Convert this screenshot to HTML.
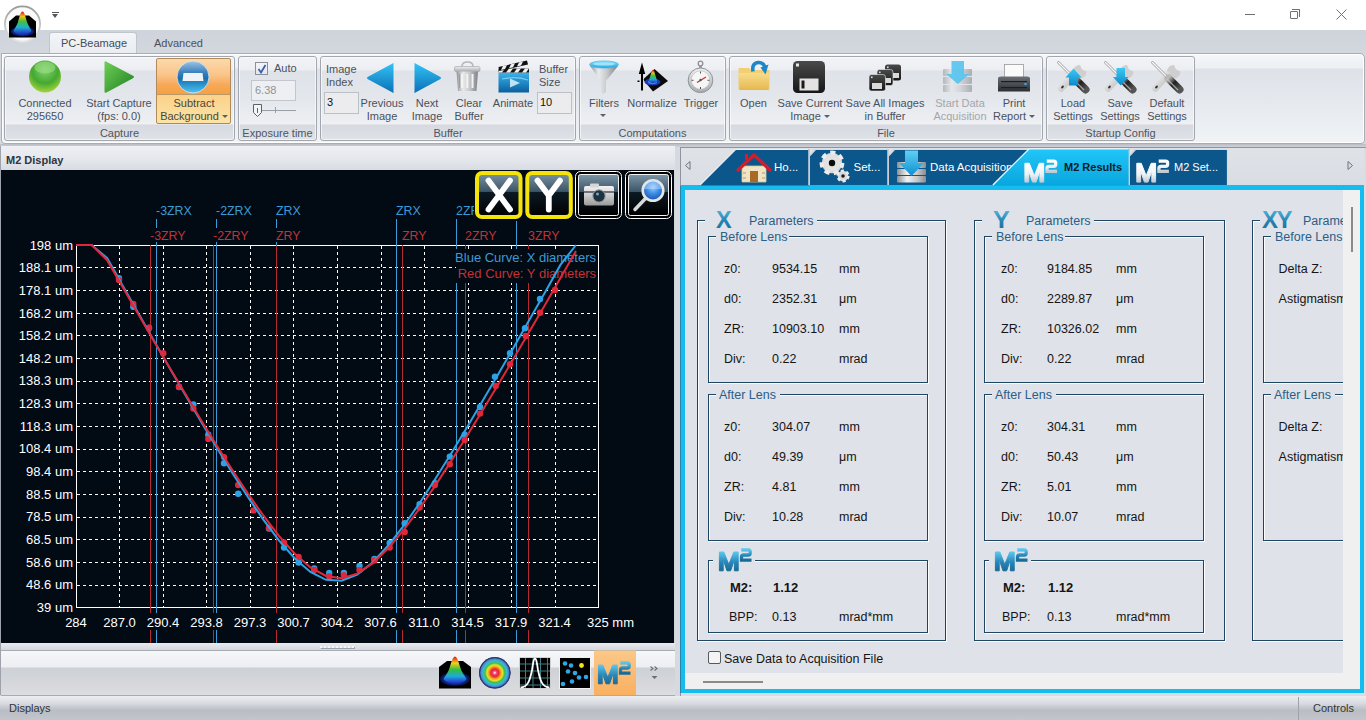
<!DOCTYPE html>
<html><head><meta charset="utf-8">
<style>
*{margin:0;padding:0;box-sizing:border-box}
html,body{width:1366px;height:720px;overflow:hidden}
body{position:relative;background:#d6d9df;font-family:"Liberation Sans",sans-serif;font-size:11px;color:#4b515c}
.a{position:absolute}
.t{position:absolute;white-space:nowrap;line-height:13px}
.c{text-align:center}
/* title bar */
#title{left:0;top:0;width:1366px;height:30px;background:#fff}
/* ribbon */
#tabrow{left:0;top:30px;width:1366px;height:25px;background:linear-gradient(#cfd3db,#d3d7de)}
#rbody{left:1px;top:53px;width:1364px;height:91px;background:linear-gradient(#f5f7fa 0,#eceff3 14px,#dee2e8 15px,#e6e9ee 50px,#f0f4f6 88px);border:1px solid #a9adb3;border-radius:0 5px 4px 4px;box-shadow:inset 0 0 0 1px #fff}
.grp{position:absolute;top:56px;height:85px;border:1px solid #a2a7af;border-radius:3px;
 background:linear-gradient(#f2f3f6 0,#eceef2 13px,#dfe2e8 14px,#e3e6eb 40px,#eef0f3 67px,#d6d9df 68px,#e0e3e8 84px);box-shadow:inset 0 0 0 1px rgba(255,255,255,.6)}
.gl{position:absolute;bottom:0px;left:0;right:0;text-align:center;line-height:13px;color:#4f5562}
.dd{display:inline-block;width:0;height:0;border-left:3px solid transparent;border-right:3px solid transparent;border-top:3px solid #5a606b;vertical-align:middle;margin-left:3px;margin-top:-2px}
.tb{position:absolute;background:#eceef1;border:1px solid #b7bcc4}
</style></head><body>
<svg width="0" height="0" style="position:absolute">
<defs>
<linearGradient id="m2teal" x1="0" y1="0" x2="0" y2="1"><stop offset="0" stop-color="#5cc6ee"/><stop offset="0.55" stop-color="#2686b9"/><stop offset="1" stop-color="#1a6a96"/></linearGradient>
<linearGradient id="m2silver" x1="0" y1="0" x2="0" y2="1"><stop offset="0" stop-color="#ffffff"/><stop offset="0.6" stop-color="#eef1f4"/><stop offset="1" stop-color="#c2cad2"/></linearGradient>
<g id="m2sym">
<path d="M0.4 22.8V4H4.8L9.8 16.5L14.8 4H19.2V22.8H15.4V11.5L11.6 22.8H8L4.2 11.5V22.8Z"/>
<path d="M22.3 1.8H29.2Q31.2 1.8 31.2 3.8V4.9Q31.2 7 29.2 7H24.6Q22.5 7 22.5 9.1V12.1H32.5" fill="none" stroke-width="3.3"/>
</g>
</defs></svg>
<div id="title" class="a"></div>
<!-- window controls -->
<div class="a" style="left:1245px;top:14px;width:10px;height:1px;background:#707070"></div>
<div class="a" style="left:1290px;top:11px;width:8px;height:8px;border:1px solid #707070;border-radius:1px"></div>
<div class="a" style="left:1292px;top:9px;width:8px;height:8px;border-top:1px solid #707070;border-right:1px solid #707070;border-radius:0 1px 0 0"></div>
<svg class="a" style="left:1336px;top:9px" width="11" height="11"><path d="M0.5 0.5L10.5 10.5M10.5 0.5L0.5 10.5" stroke="#707070" stroke-width="1"/></svg>
<!-- quick access -->
<div class="a" style="left:52px;top:12px;width:7px;height:1px;background:#555"></div>
<div class="a" style="left:52px;top:14px;width:0;height:0;border-left:3.5px solid transparent;border-right:3.5px solid transparent;border-top:4px solid #555"></div>

<div id="tabrow" class="a"></div>
<div class="a" style="left:49px;top:32px;width:88px;height:23px;border:1px solid #c1c5cc;border-bottom:none;border-radius:3px 3px 0 0;background:linear-gradient(#f3f5f8,#e9ecf0)"></div>
<div class="t" style="left:61px;top:37px;color:#454b57">PC-Beamage</div>
<div class="t" style="left:154px;top:37px;color:#4b515c">Advanced</div>

<div id="rbody" class="a"></div>
<div class="a" style="left:0;top:144px;width:1366px;height:3px;background:linear-gradient(#b9bdc3,#d0d3d9)"></div>

<!-- groups -->
<div class="grp" style="left:4px;width:231px"><div class="gl">Capture</div></div>
<div class="grp" style="left:238px;width:79px"><div class="gl">Exposure time</div></div>
<div class="grp" style="left:320px;width:256px"><div class="gl">Buffer</div></div>
<div class="grp" style="left:579px;width:147px"><div class="gl">Computations</div></div>
<div class="grp" style="left:729px;width:314px"><div class="gl">File</div></div>
<div class="grp" style="left:1046px;width:149px"><div class="gl">Startup Config</div></div>


<!-- Capture -->
<div class="a" style="left:156px;top:58px;width:75px;height:66px;border:1px solid #b08a58;border-radius:2px;background:linear-gradient(#fcd9ab 0,#fac489 25%,#f7a95a 40%,#f6a042 54%,#9c8058 55%,#fbd28b 56.5%,#fde3a6 100%)"></div>
<div class="t c" style="left:4px;top:97px;width:82px">Connected<br>295650</div>
<div class="t c" style="left:80px;top:97px;width:78px">Start Capture<br>(fps: 0.0)</div>
<div class="t c" style="left:156px;top:97px;width:76px;color:#4a4636">Subtract<br>Background<span class="dd"></span></div>

<!-- Exposure -->
<div class="a" style="left:255px;top:62px;width:13px;height:13px;border:1px solid #8a8f98;background:linear-gradient(#f4f5f7,#e4e6ea)"></div>
<svg class="a" style="left:257px;top:64px" width="10" height="10"><path d="M1.5 5 L4 8.5 L8.5 1" fill="none" stroke="#3b5fb0" stroke-width="1.8"/></svg>
<div class="t" style="left:274px;top:62px">Auto</div>
<div class="tb" style="left:251px;top:80px;width:45px;height:21px;background:#eeeff2;border-color:#c3c6cc"></div>
<div class="t" style="left:255px;top:84px;color:#8f939b">6.38</div>
<div class="a" style="left:262px;top:110px;width:34px;height:1px;background:#9a9ea6"></div>
<div class="a" style="left:275px;top:107px;width:1px;height:6px;background:#9a9ea6"></div>
<svg class="a" style="left:252px;top:103px" width="11" height="15"><path d="M1.5 1.5H9.5V9.5L5.5 13.5L1.5 9.5Z" fill="#f3f4f6" stroke="#5c6068"/><path d="M5.5 5V10" stroke="#5c6068"/></svg>

<!-- Buffer -->
<div class="t" style="left:326px;top:63px">Image<br>Index</div>
<div class="tb" style="left:324px;top:92px;width:35px;height:22px;background:#ececef;border-color:#bcc0c7"></div>
<div class="t" style="left:327px;top:96px;color:#111">3</div>
<div class="t c" style="left:358px;top:97px;width:48px">Previous<br>Image</div>
<div class="t c" style="left:406px;top:97px;width:42px">Next<br>Image</div>
<div class="t c" style="left:448px;top:97px;width:42px">Clear<br>Buffer</div>
<div class="t c" style="left:490px;top:97px;width:46px;line-height:13px">Animate</div>
<div class="t" style="left:539px;top:63px">Buffer<br>Size</div>
<div class="tb" style="left:537px;top:92px;width:35px;height:22px;background:#ececef;border-color:#bcc0c7"></div>
<div class="t" style="left:540px;top:96px;color:#111">10</div>

<!-- Computations -->
<div class="t c" style="left:583px;top:97px;width:42px">Filters</div>
<div class="a" style="left:600px;top:114px;width:0;height:0;border-left:3px solid transparent;border-right:3px solid transparent;border-top:3px solid #5a606b"></div>
<div class="t c" style="left:625px;top:97px;width:54px">Normalize</div>
<div class="t c" style="left:679px;top:97px;width:44px">Trigger</div>

<!-- File -->
<div class="t c" style="left:733px;top:97px;width:41px">Open</div>
<div class="t c" style="left:774px;top:97px;width:72px">Save Current<br>Image<span class="dd"></span></div>
<div class="t c" style="left:845px;top:97px;width:80px">Save All Images<br>in Buffer</div>
<div class="t c" style="left:928px;top:97px;width:64px;color:#a3a6ab">Start Data<br>Acquisition</div>
<div class="t c" style="left:990px;top:97px;width:48px">Print<br>Report<span class="dd"></span></div>

<!-- Startup -->
<div class="t c" style="left:1050px;top:97px;width:46px">Load<br>Settings</div>
<div class="t c" style="left:1097px;top:97px;width:46px">Save<br>Settings</div>
<div class="t c" style="left:1144px;top:97px;width:46px">Default<br>Settings</div>
<svg class="a" style="left:0;top:0" width="1366" height="145" viewBox="0 0 1366 145">
<defs>
<radialGradient id="gsph" cx="0.5" cy="0.3" r="0.75"><stop offset="0" stop-color="#7fd46a"/><stop offset="0.55" stop-color="#45a832"/><stop offset="1" stop-color="#b4dc3c"/></radialGradient>
<linearGradient id="gtri" x1="0" y1="0" x2="1" y2="1"><stop offset="0" stop-color="#6fcf55"/><stop offset="1" stop-color="#1f7f22"/></linearGradient>
<linearGradient id="bsph" x1="0" y1="0" x2="0" y2="1"><stop offset="0" stop-color="#9cc6e6"/><stop offset="0.35" stop-color="#3d82bd"/><stop offset="0.55" stop-color="#1870b0"/><stop offset="1" stop-color="#4cc4f2"/></linearGradient>
<linearGradient id="btri" x1="0" y1="0" x2="0" y2="1"><stop offset="0" stop-color="#33c3f5"/><stop offset="1" stop-color="#0a70b6"/></linearGradient>
<linearGradient id="silv" x1="0" y1="0" x2="1" y2="0"><stop offset="0" stop-color="#8f9296"/><stop offset="0.3" stop-color="#e9eaeb"/><stop offset="0.6" stop-color="#c7c9cb"/><stop offset="1" stop-color="#7e8185"/></linearGradient>
<linearGradient id="silvv" x1="0" y1="0" x2="0" y2="1"><stop offset="0" stop-color="#f0f0f0"/><stop offset="1" stop-color="#a8aaad"/></linearGradient>
<linearGradient id="fold" x1="0" y1="0" x2="0" y2="1"><stop offset="0" stop-color="#f7dc8c"/><stop offset="1" stop-color="#e6b84e"/></linearGradient>
<linearGradient id="cone" x1="0" y1="0" x2="0" y2="1"><stop offset="0" stop-color="#e01010"/><stop offset="0.22" stop-color="#f0c020"/><stop offset="0.45" stop-color="#40c040"/><stop offset="0.7" stop-color="#20b0d0"/><stop offset="1" stop-color="#2030c0"/></linearGradient>
<radialGradient id="base" cx="0.5" cy="0.5" r="0.5"><stop offset="0" stop-color="#3aa0e0"/><stop offset="0.6" stop-color="#1830b0"/><stop offset="1" stop-color="#05104a"/></radialGradient>
<linearGradient id="ring" x1="0" y1="0" x2="0" y2="1"><stop offset="0" stop-color="#9a9a9a"/><stop offset="1" stop-color="#e6e6e6"/></linearGradient>
<linearGradient id="clap" x1="0" y1="0" x2="0" y2="1"><stop offset="0" stop-color="#39b4ec"/><stop offset="1" stop-color="#0b5f9e"/></linearGradient>
<linearGradient id="rim" x1="0" y1="0" x2="0" y2="1"><stop offset="0" stop-color="#8fe0fb"/><stop offset="1" stop-color="#1ea8e0"/></linearGradient>
<linearGradient id="flop" x1="0" y1="0" x2="0" y2="1"><stop offset="0" stop-color="#4a4a4a"/><stop offset="1" stop-color="#161616"/></linearGradient>
<linearGradient id="prn" x1="0" y1="0" x2="0" y2="1"><stop offset="0" stop-color="#6c7075"/><stop offset="1" stop-color="#2b2e32"/></linearGradient>
<linearGradient id="arrc" x1="0" y1="0" x2="0" y2="1"><stop offset="0" stop-color="#3cc8f4"/><stop offset="1" stop-color="#0a8acb"/></linearGradient>
<linearGradient id="hdl" x1="0" y1="0" x2="1" y2="0"><stop offset="0" stop-color="#2a2a2a"/><stop offset="0.5" stop-color="#b9b9b9"/><stop offset="1" stop-color="#3a3a3a"/></linearGradient>
</defs>

<!-- app logo -->
<circle cx="22.5" cy="24" r="17.6" fill="#fafafa" stroke="url(#ring)" stroke-width="1.8"/>
<path d="M9 21.5L16 15.5H29L36 21.5V37.5H9Z" fill="#000"/>
<ellipse cx="22.5" cy="31.5" rx="12" ry="5" fill="url(#base)"/>
<path d="M22.5 11.5C20.5 11.7 19.5 17 18 22C16.5 26.5 14 29 13.5 31C15 33.5 19 34 22.5 34C26 34 30 33.5 31.5 31C31 29 28.5 26.5 27 22C25.5 17 24.5 11.7 22.5 11.5Z" fill="url(#cone)"/>
<!-- Connected sphere -->
<circle cx="45" cy="76.5" r="16" fill="url(#gsph)"/>
<ellipse cx="45" cy="67.5" rx="10.5" ry="6" fill="#a2e08c" opacity=".55"/>
<!-- play -->
<path d="M106 61.5Q104.5 60.5 104.5 62.5V91.5Q104.5 93.5 106.5 92.5L133 78.3Q135 77 133 75.8Z" fill="url(#gtri)"/>
<!-- subtract bg sphere -->
<circle cx="193" cy="77" r="16" fill="url(#bsph)" stroke="#d9e9f4" stroke-width=".8"/>

<path d="M183.5 73H202.5L203.5 81H182.5Z" fill="#eef3f6"/>

<!-- prev / next -->
<path d="M393.5 63.5Q394 62.5 393 63.2L367.5 77Q366.5 78 367.5 79L393 92.8Q394 93.5 393.5 92Z" fill="url(#btri)"/>
<path d="M414.5 63.5Q414 62.5 415 63.2L440.5 77Q441.5 78 440.5 79L415 92.8Q414 93.5 414.5 92Z" fill="url(#btri)"/>
<!-- trash -->
<path d="M462 66.5Q462 62 467.5 62Q473 62 473 66.5" fill="none" stroke="#b5b7ba" stroke-width="1.6"/>
<rect x="454.5" y="66.5" width="25.5" height="5" rx="1.5" fill="url(#silvv)" stroke="#9ea1a4" stroke-width=".6"/>
<path d="M456.5 71.5H478L476.5 91H458Z" fill="url(#silv)"/>
<path d="M462 74V88M467.3 74V88M472.5 74V88" stroke="#f2f2f2" stroke-width="2"/>
<path d="M459.5 74V88" stroke="#9a9c9f" stroke-width="1"/>
<!-- clapperboard -->
<rect x="498.5" y="72.5" width="30.5" height="20" fill="url(#clap)"/>
<path d="M502 79Q515 76 528 80" stroke="#9fe0ff" stroke-width="1.2" fill="none" opacity=".7"/>
<path d="M510 78.5L520 83L510 87.5Z" fill="#d8f2ff" opacity=".85"/>
<rect x="498.5" y="68.5" width="30.5" height="4" fill="#111"/>
<path d="M501 68.5h4l-3 4h-4zM509 68.5h4l-3 4h-4zM517 68.5h4l-3 4h-4zM525 68.5h4l-3 4h-4z" fill="#f2f2f2"/>
<path d="M498.5 67L527 60.5L528 64.5L499.5 71Z" fill="#111"/>
<path d="M503 66l4-1-2 4-4 1zM511 64.2l4-1-2 4-4 1zM519 62.4l4-1-2 4-4 1z" fill="#f2f2f2"/>

<!-- funnel -->
<path d="M590 66H618L606 81V92L603 94L601 92V81Z" fill="url(#silv)"/>
<ellipse cx="604" cy="64.5" rx="14.5" ry="3.6" fill="url(#rim)" stroke="#2fb4e6" stroke-width=".6"/>
<ellipse cx="604" cy="64" rx="11" ry="1.6" fill="#bfefff" opacity=".7"/>
<!-- normalize -->
<path d="M643 79.5L654.5 69L668 81L653 91.5Z" fill="#0a0a0a"/>
<ellipse cx="652.5" cy="82" rx="8" ry="3.5" fill="#1d36b8"/>
<ellipse cx="652.5" cy="82" rx="4.5" ry="2" fill="#2c8ee0"/>
<path d="M653 70C651.5 70 651 75 649 80C648.5 82 651 83 653 83C655 83 657.5 82 657 80C655 75 654.5 70 653 70Z" fill="url(#cone)"/>
<path d="M642 90.5V69" stroke="#fff" stroke-width="3.6" opacity=".8"/>
<path d="M642 90.5V69" stroke="#000" stroke-width="2.2"/>
<path d="M638.8 74L642 62.5L645.2 74Z" fill="#000"/>
<rect x="637.5" y="80.5" width="2" height="1.5" fill="#000"/>
<!-- stopwatch -->
<circle cx="700.5" cy="63.5" r="2.3" fill="none" stroke="#8d9094" stroke-width="1.3"/>
<rect x="699" y="65.5" width="3" height="3" fill="#9a9da1"/>
<circle cx="700.5" cy="80.3" r="12.3" fill="url(#silvv)" stroke="#8f9296" stroke-width="1"/>
<circle cx="700.5" cy="80" r="9.2" fill="#f6f6f6" stroke="#b9bcbf" stroke-width=".6"/>
<path d="M697 82.5L706 77" stroke="#d62b2b" stroke-width="1.3"/><path d="M691.5 80.3h2M707.5 80.3h2M700.5 89v-2M700.5 71.5v2" stroke="#555" stroke-width="1"/>
<circle cx="700.5" cy="80" r="1.2" fill="#555"/>

<!-- open folder -->
<path d="M738.5 68H749L751 70H769.5V90H738.5Z" fill="#f1cf72"/>
<path d="M738.5 73H769.5L768.5 90H739.5Z" fill="url(#fold)"/>
<path d="M753 71.5Q751.5 63 758.5 62.5Q763 62.3 765 67" fill="none" stroke="#1f86c8" stroke-width="3.6"/>
<path d="M760.5 67.5L768.5 64.5L765.5 74.5Z" fill="#1f86c8"/>
<!-- floppy -->
<rect x="793" y="61" width="32" height="32" rx="4.5" fill="url(#flop)"/>
<rect x="796" y="63.5" width="3" height="3" fill="#e8e8e8"/>
<rect x="799.5" y="78.5" width="19" height="12" fill="#e3e3e3"/>
<rect x="801.5" y="80.5" width="3" height="8" fill="#1a1a1a"/>
<!-- multi floppy -->
<rect x="885" y="64.5" width="16" height="16" rx="2.5" fill="url(#flop)"/>
<rect x="893" y="73" width="6" height="5" fill="#d9d9d9"/>
<rect x="877" y="69.5" width="16" height="16" rx="2.5" fill="url(#flop)" stroke="#e6e9ee" stroke-width=".6"/>
<rect x="885" y="78" width="6" height="5" fill="#d9d9d9"/>
<rect x="869" y="74.5" width="16.5" height="16.5" rx="2.5" fill="url(#flop)" stroke="#e6e9ee" stroke-width=".6"/>
<rect x="872" y="83" width="10" height="6" fill="#d9d9d9"/>
<rect x="871" y="76.5" width="1.6" height="1.6" fill="#ddd"/><rect x="879" y="71.5" width="1.6" height="1.6" fill="#ddd"/><rect x="887" y="66.5" width="1.6" height="1.6" fill="#ddd"/>
<!-- start data acq (disabled) -->
<g opacity=".55">
<rect x="943" y="69" width="29" height="7" rx="1" fill="url(#silv)"/>
<rect x="943" y="77" width="29" height="7" rx="1" fill="url(#silv)"/>
<rect x="943" y="85" width="29" height="7" rx="1" fill="url(#silv)"/>
</g>
<path d="M951.5 61H964V74H969.5L957.8 84L946 74H951.5Z" fill="#55c3ee" opacity=".9"/>
<!-- printer -->
<rect x="1004.5" y="64.5" width="19" height="15" fill="#fafafa" stroke="#9a9a9a" stroke-width=".8"/>
<path d="M998 78.5Q998 76.5 1001 76.5H1027Q1030 76.5 1030 78.5V91.5H998Z" fill="url(#prn)"/>
<rect x="1001" y="81" width="26" height="1.2" fill="#1c1e20"/>
<rect x="1001" y="87" width="26" height="1.2" fill="#1c1e20"/>
<circle cx="1025.5" cy="84" r="1.3" fill="#3ba5e0"/>

<!-- tools -->
<defs><linearGradient id="hdl2" x1="0" y1="0" x2="1" y2="1"><stop offset="0" stop-color="#b8b8b8"/><stop offset="0.45" stop-color="#202020"/><stop offset="1" stop-color="#555"/></linearGradient>
<linearGradient id="wr" x1="0" y1="0" x2="1" y2="1"><stop offset="0" stop-color="#f4f4f4"/><stop offset="1" stop-color="#b5b5b5"/></linearGradient></defs>
<g id="tool">
<path d="M1174 65A6.8 6.8 0 1 0 1180.5 71.5L1177 70L1175.5 68.5Z" fill="#cfcfcf"/>
<path d="M1168 75L1155 88.5" stroke="url(#wr)" stroke-width="6.5" stroke-linecap="round"/>
<ellipse cx="1156.5" cy="87" rx="1.6" ry="1.1" fill="#333" transform="rotate(-45 1156.5 87)"/>
<path d="M1152.5 62.5L1166 76" stroke="#9a9a9a" stroke-width="2.6" stroke-linecap="round"/>
<path d="M1152.5 62.5L1166 76" stroke="#fafafa" stroke-width="1.4" stroke-linecap="round"/>
<path d="M1168.5 78.5L1179.5 89.5" stroke="url(#hdl2)" stroke-width="8" stroke-linecap="round"/>
<path d="M1167 79L1178 90" stroke="#cfcfcf" stroke-width="1.2" opacity=".7"/>
</g>
<use href="#tool" x="-94"/>
<path d="M1073.5 68.5L1081.5 77.5H1078V85.5H1069V77.5H1065.5Z" fill="url(#arrc)"/>
<use href="#tool" x="-47"/>
<path d="M1116.5 68H1125V77H1128.5L1120.7 85.5L1113 77H1116.5Z" fill="url(#arrc)"/>
</svg>
<!-- left panel frame -->
<div class="a" style="left:0;top:146px;width:675px;height:549px;background:#cfd3da;border-left:1px solid #9ea3ab"></div>
<div class="a" style="left:1px;top:146px;width:674px;height:24px;background:linear-gradient(#eef0f4,#e3e6eb 60%,#d8dce2)"></div>
<div class="t" style="left:6px;top:154px;font-weight:bold;font-size:11px;color:#2f3440">M2 Display</div>
<!-- splitter -->
<div class="a" style="left:1px;top:643px;width:674px;height:8px;background:linear-gradient(#e9ebef,#d3d7de);border-bottom:1px solid #a8acb3"></div>
<div class="a" style="left:320px;top:646px;width:34px;height:2px;background:repeating-linear-gradient(90deg,#f4f5f7 0 2px,transparent 2px 4px);box-shadow:1px 1px 0 rgba(120,125,135,.6)"></div>
<!-- display toolbar -->
<div class="a" style="left:1px;top:651px;width:674px;height:45px;background:linear-gradient(#f6f7f9 0,#eceef1 16px,#cdd0d5 17px,#dcdde0 44px);border-bottom:1px solid #a8abb1"></div>
<svg class="a" style="left:430px;top:650px" width="240" height="46" viewBox="430 650 240 46">
<defs>
<linearGradient id="or" x1="0" y1="0" x2="0" y2="1"><stop offset="0" stop-color="#fcc888"/><stop offset="1" stop-color="#f9b060"/></linearGradient>
<linearGradient id="cone2" x1="0" y1="0" x2="0" y2="1"><stop offset="0" stop-color="#e01010"/><stop offset="0.25" stop-color="#f0d020"/><stop offset="0.5" stop-color="#30c040"/><stop offset="0.75" stop-color="#20a8e0"/><stop offset="1" stop-color="#2030c8"/></linearGradient>
<radialGradient id="base2" cx="0.5" cy="0.5" r="0.5"><stop offset="0" stop-color="#40a8f0"/><stop offset="0.55" stop-color="#1838c0"/><stop offset="1" stop-color="#060c40"/></radialGradient>
<radialGradient id="rings" cx="0.5" cy="0.5" r="0.5">
<stop offset="0" stop-color="#fff"/><stop offset="0.12" stop-color="#f04080"/><stop offset="0.25" stop-color="#e82828"/><stop offset="0.38" stop-color="#f8a020"/><stop offset="0.5" stop-color="#e8e030"/><stop offset="0.62" stop-color="#40c040"/><stop offset="0.75" stop-color="#30c0d8"/><stop offset="0.88" stop-color="#5080d0"/><stop offset="1" stop-color="#203060"/></radialGradient>
<linearGradient id="m2g" x1="0" y1="0" x2="0" y2="1"><stop offset="0" stop-color="#58bfe6"/><stop offset="0.6" stop-color="#2482b4"/><stop offset="1" stop-color="#1a6a96"/></linearGradient>
</defs>
<!-- 3d beam -->
<path d="M439 667L447 661H463L471 667V688.5H439Z" fill="#000"/>
<ellipse cx="455" cy="679" rx="15" ry="7" fill="url(#base2)"/>
<path d="M455 656.5C452.5 657 451.5 662 449.5 668C448 673 445 676 443.5 679C446 682.5 450 683 455 683C460 683 464 682.5 466.5 679C465 676 462 673 460.5 668C458.5 662 457.5 657 455 656.5Z" fill="url(#cone2)"/>
<!-- rings -->
<circle cx="494.8" cy="672.8" r="15.8" fill="url(#rings)"/>
<circle cx="494.8" cy="672.8" r="15.3" fill="none" stroke="#2a3868" stroke-width="1"/>
<!-- gaussian -->
<rect x="519.5" y="657.5" width="31" height="31" fill="#000" stroke="#e8e8e8" stroke-width=".8"/>
<path d="M525.5 658V688M533 658V688M540.5 658V688M547.5 658V688M520 664H550M520 671H550M520 678H550M520 685H550" stroke="#3d7f86" stroke-width="1"/>
<path d="M520.5 687.5C528 687 530 680 532 670C533.5 660 534 658.5 535 658.5C536 658.5 536.5 660 538 670C540 680 542 687 549.5 687.5" fill="none" stroke="#fff" stroke-width="1.8"/>
<!-- scatter -->
<rect x="559.5" y="657.5" width="31" height="31" fill="#000" stroke="#f0f0f0" stroke-width="1"/>
<g fill="#2fa6e6">
<circle cx="565" cy="663.5" r="2.3"/><circle cx="571" cy="665.5" r="2.3"/><circle cx="568" cy="671.5" r="2.3"/><circle cx="575" cy="673" r="2.3"/><circle cx="579" cy="677.5" r="2.3"/><circle cx="586" cy="677" r="2.3"/><circle cx="572" cy="681.5" r="2.3"/><circle cx="563" cy="684" r="2.3"/>
</g>
<circle cx="581.5" cy="665.5" r="2.4" fill="#f2e41a"/>
<!-- active M2 -->
<rect x="594" y="650.5" width="42" height="44.5" fill="url(#or)"/>
<g transform="translate(598 661)" fill="url(#m2teal)" stroke="url(#m2teal)"><use href="#m2sym"/></g>
<!-- chevrons -->
<path d="M650.5 666.5L653 668.5L650.5 670.5M654.5 666.5L657 668.5L654.5 670.5" fill="none" stroke="#6a6e75" stroke-width="1.1"/>
<path d="M651.5 676H657.5L654.5 679Z" fill="#6a6e75"/>
</svg>
<svg class="a" style="left:0;top:170px" width="676" height="473" viewBox="0 170 676 473">
<rect x="1" y="170" width="673" height="473" fill="#020a14"/>
<g stroke="#ffffff" stroke-width="1" stroke-dasharray="3 3" shape-rendering="crispEdges">
<line x1="77" y1="267.5" x2="598" y2="267.5"/>
<line x1="77" y1="290.5" x2="598" y2="290.5"/>
<line x1="77" y1="313.5" x2="598" y2="313.5"/>
<line x1="77" y1="335.5" x2="598" y2="335.5"/>
<line x1="77" y1="358.5" x2="598" y2="358.5"/>
<line x1="77" y1="381.5" x2="598" y2="381.5"/>
<line x1="77" y1="403.5" x2="598" y2="403.5"/>
<line x1="77" y1="426.5" x2="598" y2="426.5"/>
<line x1="77" y1="449.5" x2="598" y2="449.5"/>
<line x1="77" y1="471.5" x2="598" y2="471.5"/>
<line x1="77" y1="494.5" x2="598" y2="494.5"/>
<line x1="77" y1="517.5" x2="598" y2="517.5"/>
<line x1="77" y1="539.5" x2="598" y2="539.5"/>
<line x1="77" y1="562.5" x2="598" y2="562.5"/>
<line x1="77" y1="585.5" x2="598" y2="585.5"/>
<line x1="119.5" y1="246" x2="119.5" y2="607"/>
<line x1="163.5" y1="246" x2="163.5" y2="607"/>
<line x1="206.5" y1="246" x2="206.5" y2="607"/>
<line x1="250.5" y1="246" x2="250.5" y2="607"/>
<line x1="293.5" y1="246" x2="293.5" y2="607"/>
<line x1="337.5" y1="246" x2="337.5" y2="607"/>
<line x1="381.5" y1="246" x2="381.5" y2="607"/>
<line x1="424.5" y1="246" x2="424.5" y2="607"/>
<line x1="468.5" y1="246" x2="468.5" y2="607"/>
<line x1="511.5" y1="246" x2="511.5" y2="607"/>
<line x1="555.5" y1="246" x2="555.5" y2="607"/>
</g>
<path d="M76.5 245.5H598.5V607.5H76.5Z" fill="none" stroke="#fff" stroke-width="1" shape-rendering="crispEdges"/>
<g stroke-width="1" shape-rendering="crispEdges">
<line x1="156.5" y1="219" x2="156.5" y2="643" stroke="#3b9bd6"/>
<line x1="216.5" y1="219" x2="216.5" y2="643" stroke="#3b9bd6"/>
<line x1="276.5" y1="219" x2="276.5" y2="643" stroke="#3b9bd6"/>
<line x1="396.5" y1="219" x2="396.5" y2="643" stroke="#3b9bd6"/>
<line x1="456.5" y1="219" x2="456.5" y2="643" stroke="#3b9bd6"/>
<line x1="516.5" y1="219" x2="516.5" y2="643" stroke="#3b9bd6"/>
<line x1="150.5" y1="245" x2="150.5" y2="643" stroke="#b42a30"/>
<line x1="213.5" y1="245" x2="213.5" y2="643" stroke="#b42a30"/>
<line x1="276.5" y1="245" x2="276.5" y2="643" stroke="#b42a30"/>
<line x1="402.5" y1="245" x2="402.5" y2="643" stroke="#b42a30"/>
<line x1="465.5" y1="245" x2="465.5" y2="643" stroke="#b42a30"/>
<line x1="528.5" y1="245" x2="528.5" y2="643" stroke="#b42a30"/>
</g>
<rect x="60" y="613" width="560" height="17" fill="#020a14"/>
<text x="76.0" y="627" font-family="Liberation Sans" font-size="13" fill="#fff" text-anchor="middle">284</text>
<text x="119.5" y="627" font-family="Liberation Sans" font-size="13" fill="#fff" text-anchor="middle">287.0</text>
<text x="163.0" y="627" font-family="Liberation Sans" font-size="13" fill="#fff" text-anchor="middle">290.4</text>
<text x="206.5" y="627" font-family="Liberation Sans" font-size="13" fill="#fff" text-anchor="middle">293.8</text>
<text x="250.0" y="627" font-family="Liberation Sans" font-size="13" fill="#fff" text-anchor="middle">297.3</text>
<text x="293.5" y="627" font-family="Liberation Sans" font-size="13" fill="#fff" text-anchor="middle">300.7</text>
<text x="337.0" y="627" font-family="Liberation Sans" font-size="13" fill="#fff" text-anchor="middle">304.2</text>
<text x="380.5" y="627" font-family="Liberation Sans" font-size="13" fill="#fff" text-anchor="middle">307.6</text>
<text x="424.0" y="627" font-family="Liberation Sans" font-size="13" fill="#fff" text-anchor="middle">311.0</text>
<text x="467.5" y="627" font-family="Liberation Sans" font-size="13" fill="#fff" text-anchor="middle">314.5</text>
<text x="511.0" y="627" font-family="Liberation Sans" font-size="13" fill="#fff" text-anchor="middle">317.9</text>
<text x="554.5" y="627" font-family="Liberation Sans" font-size="13" fill="#fff" text-anchor="middle">321.4</text>
<text x="587" y="627" font-family="Liberation Sans" font-size="13" fill="#fff">325 mm</text>
<text x="73" y="249.7" font-family="Liberation Sans" font-size="13" fill="#fff" text-anchor="end">198 um</text>
<text x="73" y="272.3" font-family="Liberation Sans" font-size="13" fill="#fff" text-anchor="end">188.1 um</text>
<text x="73" y="294.9" font-family="Liberation Sans" font-size="13" fill="#fff" text-anchor="end">178.1 um</text>
<text x="73" y="317.6" font-family="Liberation Sans" font-size="13" fill="#fff" text-anchor="end">168.2 um</text>
<text x="73" y="340.2" font-family="Liberation Sans" font-size="13" fill="#fff" text-anchor="end">158.2 um</text>
<text x="73" y="362.8" font-family="Liberation Sans" font-size="13" fill="#fff" text-anchor="end">148.2 um</text>
<text x="73" y="385.4" font-family="Liberation Sans" font-size="13" fill="#fff" text-anchor="end">138.3 um</text>
<text x="73" y="408.1" font-family="Liberation Sans" font-size="13" fill="#fff" text-anchor="end">128.3 um</text>
<text x="73" y="430.7" font-family="Liberation Sans" font-size="13" fill="#fff" text-anchor="end">118.3 um</text>
<text x="73" y="453.3" font-family="Liberation Sans" font-size="13" fill="#fff" text-anchor="end">108.4 um</text>
<text x="73" y="475.9" font-family="Liberation Sans" font-size="13" fill="#fff" text-anchor="end">98.4 um</text>
<text x="73" y="498.6" font-family="Liberation Sans" font-size="13" fill="#fff" text-anchor="end">88.5 um</text>
<text x="73" y="521.2" font-family="Liberation Sans" font-size="13" fill="#fff" text-anchor="end">78.5 um</text>
<text x="73" y="543.8" font-family="Liberation Sans" font-size="13" fill="#fff" text-anchor="end">68.5 um</text>
<text x="73" y="566.5" font-family="Liberation Sans" font-size="13" fill="#fff" text-anchor="end">58.6 um</text>
<text x="73" y="589.1" font-family="Liberation Sans" font-size="13" fill="#fff" text-anchor="end">48.6 um</text>
<text x="73" y="611.7" font-family="Liberation Sans" font-size="13" fill="#fff" text-anchor="end">39 um</text>
<rect x="156" y="203" width="37.6" height="15" fill="#020a14"/>
<rect x="216" y="203" width="37.6" height="15" fill="#020a14"/>
<rect x="276" y="203" width="26.0" height="15" fill="#020a14"/>
<rect x="396" y="203" width="26.0" height="15" fill="#020a14"/>
<rect x="456" y="203" width="33.2" height="15" fill="#020a14"/>
<rect x="516" y="203" width="33.2" height="15" fill="#020a14"/>
<rect x="150" y="228" width="37.6" height="14" fill="#020a14"/>
<rect x="213" y="228" width="37.6" height="14" fill="#020a14"/>
<rect x="276" y="228" width="26.0" height="14" fill="#020a14"/>
<rect x="402" y="228" width="26.0" height="14" fill="#020a14"/>
<rect x="465" y="228" width="33.2" height="14" fill="#020a14"/>
<rect x="528" y="228" width="33.2" height="14" fill="#020a14"/>
<text x="156" y="215" font-family="Liberation Sans" font-size="12.4" fill="#3b9bd6">-3ZRX</text>
<text x="216" y="215" font-family="Liberation Sans" font-size="12.4" fill="#3b9bd6">-2ZRX</text>
<text x="276" y="215" font-family="Liberation Sans" font-size="12.4" fill="#3b9bd6">ZRX</text>
<text x="396" y="215" font-family="Liberation Sans" font-size="12.4" fill="#3b9bd6">ZRX</text>
<text x="456" y="215" font-family="Liberation Sans" font-size="12.4" fill="#3b9bd6">2ZRX</text>
<text x="516" y="215" font-family="Liberation Sans" font-size="12.4" fill="#3b9bd6">3ZRX</text>
<text x="150" y="240" font-family="Liberation Sans" font-size="12.4" fill="#c23236">-3ZRY</text>
<text x="213" y="240" font-family="Liberation Sans" font-size="12.4" fill="#c23236">-2ZRY</text>
<text x="276" y="240" font-family="Liberation Sans" font-size="12.4" fill="#c23236">ZRY</text>
<text x="402" y="240" font-family="Liberation Sans" font-size="12.4" fill="#c23236">ZRY</text>
<text x="465" y="240" font-family="Liberation Sans" font-size="12.4" fill="#c23236">2ZRY</text>
<text x="528" y="240" font-family="Liberation Sans" font-size="12.4" fill="#c23236">3ZRY</text>
<rect x="456" y="249" width="141" height="34" fill="#020a14"/>
<text x="596" y="262" font-family="Liberation Sans" font-size="13" fill="#3b9bd6" text-anchor="end">Blue Curve: X diameters</text>
<text x="596" y="278" font-family="Liberation Sans" font-size="13" fill="#c23236" text-anchor="end">Red Curve: Y diameters</text>
<circle cx="119" cy="278.3" r="3.2" fill="#2ba3e6"/>
<circle cx="133.3" cy="306.7" r="3.2" fill="#2ba3e6"/>
<circle cx="149" cy="328" r="3.2" fill="#2ba3e6"/>
<circle cx="179" cy="387" r="3.2" fill="#2ba3e6"/>
<circle cx="193.4" cy="404.5" r="3.2" fill="#2ba3e6"/>
<circle cx="208.3" cy="434.7" r="3.2" fill="#2ba3e6"/>
<circle cx="224" cy="463.2" r="3.2" fill="#2ba3e6"/>
<circle cx="238.2" cy="493.75" r="3.2" fill="#2ba3e6"/>
<circle cx="269" cy="528.5" r="3.2" fill="#2ba3e6"/>
<circle cx="284" cy="547.6" r="3.2" fill="#2ba3e6"/>
<circle cx="298.6" cy="562.5" r="3.2" fill="#2ba3e6"/>
<circle cx="314.2" cy="568.4" r="3.2" fill="#2ba3e6"/>
<circle cx="329.2" cy="573" r="3.2" fill="#2ba3e6"/>
<circle cx="343.9" cy="573" r="3.2" fill="#2ba3e6"/>
<circle cx="359.5" cy="566" r="3.2" fill="#2ba3e6"/>
<circle cx="374.4" cy="559" r="3.2" fill="#2ba3e6"/>
<circle cx="389.7" cy="543" r="3.2" fill="#2ba3e6"/>
<circle cx="404.7" cy="523.3" r="3.2" fill="#2ba3e6"/>
<circle cx="419.6" cy="504.2" r="3.2" fill="#2ba3e6"/>
<circle cx="434.9" cy="483.3" r="3.2" fill="#2ba3e6"/>
<circle cx="449.8" cy="456.6" r="3.2" fill="#2ba3e6"/>
<circle cx="464.7" cy="434.7" r="3.2" fill="#2ba3e6"/>
<circle cx="480" cy="407" r="3.2" fill="#2ba3e6"/>
<circle cx="495" cy="376.7" r="3.2" fill="#2ba3e6"/>
<circle cx="510" cy="353.3" r="3.2" fill="#2ba3e6"/>
<circle cx="525" cy="328.3" r="3.2" fill="#2ba3e6"/>
<circle cx="540" cy="299" r="3.2" fill="#2ba3e6"/>
<circle cx="119" cy="280" r="3.2" fill="#e0283a"/>
<circle cx="133.3" cy="304" r="3.2" fill="#e0283a"/>
<circle cx="149" cy="327.7" r="3.2" fill="#e0283a"/>
<circle cx="163.3" cy="353.3" r="3.2" fill="#e0283a"/>
<circle cx="179" cy="386.7" r="3.2" fill="#e0283a"/>
<circle cx="193.4" cy="408.5" r="3.2" fill="#e0283a"/>
<circle cx="208.3" cy="438.9" r="3.2" fill="#e0283a"/>
<circle cx="224" cy="457.3" r="3.2" fill="#e0283a"/>
<circle cx="238.2" cy="485" r="3.2" fill="#e0283a"/>
<circle cx="253.5" cy="510.4" r="3.2" fill="#e0283a"/>
<circle cx="269" cy="527.8" r="3.2" fill="#e0283a"/>
<circle cx="284" cy="542.4" r="3.2" fill="#e0283a"/>
<circle cx="298.6" cy="557" r="3.2" fill="#e0283a"/>
<circle cx="314.2" cy="570" r="3.2" fill="#e0283a"/>
<circle cx="329.2" cy="576.4" r="3.2" fill="#e0283a"/>
<circle cx="343.9" cy="575.3" r="3.2" fill="#e0283a"/>
<circle cx="359.5" cy="570" r="3.2" fill="#e0283a"/>
<circle cx="374.4" cy="560.4" r="3.2" fill="#e0283a"/>
<circle cx="389.7" cy="547.6" r="3.2" fill="#e0283a"/>
<circle cx="404.7" cy="532" r="3.2" fill="#e0283a"/>
<circle cx="419.6" cy="507.6" r="3.2" fill="#e0283a"/>
<circle cx="434.9" cy="485" r="3.2" fill="#e0283a"/>
<circle cx="449.8" cy="464.2" r="3.2" fill="#e0283a"/>
<circle cx="464.7" cy="440" r="3.2" fill="#e0283a"/>
<circle cx="480" cy="413.6" r="3.2" fill="#e0283a"/>
<circle cx="495.7" cy="386" r="3.2" fill="#e0283a"/>
<circle cx="510" cy="364.3" r="3.2" fill="#e0283a"/>
<circle cx="525.7" cy="336" r="3.2" fill="#e0283a"/>
<circle cx="540" cy="312.7" r="3.2" fill="#e0283a"/>
<circle cx="555" cy="290" r="3.2" fill="#e0283a"/>
<path d="M76.0 245.0 L91.6 245.0 L107.2 258.1 L122.9 285.9 L138.5 313.5 L154.1 341.0 L169.8 368.2 L185.4 395.1 L201.0 421.6 L216.6 447.6 L232.2 472.8 L247.9 497.0 L263.5 519.9 L279.1 540.6 L294.8 558.5 L310.4 572.0 L326.0 579.8 L341.6 580.7 L357.2 574.5 L372.9 562.2 L388.5 545.3 L404.1 525.2 L419.8 502.8 L435.4 478.8 L451.0 453.8 L466.6 428.0 L482.2 401.6 L497.9 374.8 L513.5 347.7 L529.1 320.3 L544.8 292.7 L560.4 264.9 L576.0 245.0" fill="none" stroke="#2ba3e6" stroke-width="2"/>
<path d="M76.0 245.0 L91.6 245.0 L107.2 260.4 L122.9 287.6 L138.5 314.6 L154.1 341.4 L169.8 367.9 L185.4 394.1 L201.0 420.0 L216.6 445.2 L232.2 469.8 L247.9 493.5 L263.5 515.7 L279.1 536.1 L294.8 553.7 L310.4 567.5 L326.0 576.0 L341.6 578.2 L357.2 573.7 L372.9 563.2 L388.5 548.0 L404.1 529.3 L419.8 508.2 L435.4 485.4 L451.0 461.4 L466.6 436.5 L482.2 411.0 L497.9 385.1 L513.5 358.7 L529.1 332.1 L544.8 305.2 L560.4 278.1 L576.0 250.9" fill="none" stroke="#e0283a" stroke-width="2"/>
</svg><svg class="a" style="left:470px;top:166px" width="206" height="58" viewBox="470 166 206 58">
<defs>
<linearGradient id="gl" x1="0" y1="0" x2="0" y2="1">
<stop offset="0" stop-color="#7b95a6"/><stop offset="0.42" stop-color="#3b5566"/><stop offset="0.43" stop-color="#0c1a24"/><stop offset="1" stop-color="#000"/>
</linearGradient>
<linearGradient id="slv" x1="0" y1="0" x2="0" y2="1">
<stop offset="0" stop-color="#f4f4f4"/><stop offset="0.5" stop-color="#c9c9c9"/><stop offset="1" stop-color="#9a9a9a"/>
</linearGradient>
<radialGradient id="blu" cx="0.5" cy="0.35" r="0.6">
<stop offset="0" stop-color="#9fd0ff"/><stop offset="0.5" stop-color="#3f8ee6"/><stop offset="1" stop-color="#1a5cb8"/>
</radialGradient>
</defs>
<rect x="474" y="170" width="200" height="51" fill="#020a14"/>
<!-- X -->
<rect x="477" y="173" width="43.5" height="44" rx="5" fill="url(#gl)" stroke="#f4e40c" stroke-width="4"/>
<path d="M488.5 180.5L510 209.5M510 180.5L488.5 209.5" stroke="#fff" stroke-width="5.8" stroke-linecap="round"/>
<!-- Y -->
<rect x="527.3" y="173" width="43.5" height="44" rx="5" fill="url(#gl)" stroke="#f4e40c" stroke-width="4"/>
<path d="M537.5 180.5L548.8 195.5L560 180.5M548.8 195.5V209.5" fill="none" stroke="#fff" stroke-width="5.8" stroke-linecap="round" stroke-linejoin="round"/>
<!-- camera -->
<rect x="575.5" y="171.5" width="46" height="47" rx="5" fill="#000" stroke="#ffffff" stroke-width="1"/>
<rect x="578.5" y="174.5" width="40" height="41" rx="2" fill="url(#gl)" stroke="#f0f4f6" stroke-width="1"/>
<rect x="584" y="186" width="30" height="19.5" rx="2" fill="url(#slv)"/>
<rect x="590" y="183.5" width="9" height="4" rx="1" fill="#d6d6d6"/>
<rect x="584" y="191" width="30" height="2" fill="#6e7379"/>
<circle cx="599" cy="196" r="6.2" fill="#1c3240" stroke="#9aa3a8" stroke-width="1"/>
<circle cx="597.5" cy="194" r="1.5" fill="#7fa2b8"/>
<!-- magnifier -->
<rect x="625.5" y="171.5" width="46" height="47" rx="5" fill="#000" stroke="#ffffff" stroke-width="1"/>
<rect x="628.5" y="174.5" width="40" height="41" rx="2" fill="url(#gl)" stroke="#f0f4f6" stroke-width="1"/>
<path d="M645 199L635 209.5" stroke="#d9d9d9" stroke-width="3.5" stroke-linecap="round"/>
<circle cx="653" cy="190.5" r="10.3" fill="url(#blu)" stroke="#e6e6e6" stroke-width="2.6"/>
<path d="M644.5 189a8.5 8.5 0 0 1 17 0z" fill="#b9dcff" opacity=".45"/>
</svg>
<!-- right panel -->
<div class="a" style="left:680px;top:147px;width:686px;height:549px;background:#d9dce2;border-left:1px solid #8f949c;border-top:1px solid #8f949c"></div>
<div class="a" style="left:681px;top:148px;width:683px;height:38px;background:linear-gradient(#dfe2e7,#d9dce2)"></div>
<!-- cyan frame -->
<div class="a" style="left:680px;top:185px;width:684px;height:508px;border:solid #14bcef;border-width:5px 4px 4px 5px;background:#dfe2e8"></div>
<div class="a" style="left:685px;top:673px;width:675px;height:16px;background:#f0f0f0"></div>
<div class="a" style="left:1343px;top:190px;width:17px;height:499px;background:#f0f0f0"></div>
<div class="a" style="left:680px;top:186px;width:1px;height:507px;background:#2a86a8"></div>
<div class="a" style="left:703px;top:681px;width:60px;height:2px;background:#8a8a8a"></div>
<div class="a" style="left:1351px;top:207px;width:2px;height:45px;background:#8a8a8a"></div>

<!-- status bar -->
<div class="a" style="left:0;top:696px;width:1366px;height:24px;background:linear-gradient(#eceef1 0,#d8dbe0 30%,#b9bdc4 60%,#c3c6cc 100%)"></div>
<div class="a" style="left:1298px;top:697px;width:1px;height:23px;background:#9ea2a9"></div>
<div class="t" style="left:9px;top:702px;color:#333">Displays</div>
<div class="t" style="left:1313px;top:702px;color:#333">Controls</div>
<div class="a" style="left:685px;top:190px;width:658px;height:483px;overflow:hidden">
<div class="a" style="left:-685px;top:-190px;width:1366px;height:720px">
<div class="a" style="left:697px;top:220px;width:249px;height:421px;border:1px solid #1e4562;box-shadow:inset 1px 1px 0 #fbfdff,1px 1px 0 #fbfdff"></div>
<div class="a" style="left:705px;top:219px;width:112px;height:3px;background:#dfe2e8"></div>
<svg class="a" style="left:716px;top:210px" width="18" height="20"><defs><linearGradient id="lg716210" x1="0" y1="0" x2="0" y2="1"><stop offset="0" stop-color="#5ec3ec"/><stop offset="0.55" stop-color="#2683b3"/><stop offset="1" stop-color="#1c6b95"/></linearGradient></defs><text x="0" y="18" font-family="Liberation Sans" font-weight="bold" font-size="24" fill="url(#lg716210)" transform="scale(0.98,1)">X</text></svg>
<div class="t" style="left:749px;top:214.2px;font-size:12.5px;line-height:15.5px;color:#2a5e87;">Parameters</div>
<div class="a" style="left:708px;top:236px;width:220px;height:147px;border:1px solid #1e4562;box-shadow:inset 1px 1px 0 #fbfdff,1px 1px 0 #fbfdff"></div>
<div class="a" style="left:716px;top:235px;width:73px;height:3px;background:#dfe2e8"></div>
<div class="t" style="left:720px;top:229.8px;font-size:12.5px;line-height:15.5px;color:#2a5e87;">Before Lens</div>
<div class="a" style="left:708px;top:394px;width:220px;height:147px;border:1px solid #1e4562;box-shadow:inset 1px 1px 0 #fbfdff,1px 1px 0 #fbfdff"></div>
<div class="a" style="left:716px;top:393px;width:64px;height:3px;background:#dfe2e8"></div>
<div class="t" style="left:719px;top:388.1px;font-size:12.5px;line-height:15.5px;color:#2a5e87;">After Lens</div>
<div class="t" style="left:724px;top:261.7px;font-size:12.5px;line-height:15.5px;color:#151515;">z0:</div>
<div class="t" style="left:772px;top:261.7px;font-size:12.5px;line-height:15.5px;color:#151515;">9534.15</div>
<div class="t" style="left:839px;top:261.7px;font-size:12.5px;line-height:15.5px;color:#151515;">mm</div>
<div class="t" style="left:724px;top:291.7px;font-size:12.5px;line-height:15.5px;color:#151515;">d0:</div>
<div class="t" style="left:772px;top:291.7px;font-size:12.5px;line-height:15.5px;color:#151515;">2352.31</div>
<div class="t" style="left:839px;top:291.7px;font-size:12.5px;line-height:15.5px;color:#151515;">μm</div>
<div class="t" style="left:724px;top:321.7px;font-size:12.5px;line-height:15.5px;color:#151515;">ZR:</div>
<div class="t" style="left:772px;top:321.7px;font-size:12.5px;line-height:15.5px;color:#151515;">10903.10</div>
<div class="t" style="left:839px;top:321.7px;font-size:12.5px;line-height:15.5px;color:#151515;">mm</div>
<div class="t" style="left:724px;top:351.7px;font-size:12.5px;line-height:15.5px;color:#151515;">Div:</div>
<div class="t" style="left:772px;top:351.7px;font-size:12.5px;line-height:15.5px;color:#151515;">0.22</div>
<div class="t" style="left:839px;top:351.7px;font-size:12.5px;line-height:15.5px;color:#151515;">mrad</div>
<div class="t" style="left:724px;top:419.9px;font-size:12.5px;line-height:15.5px;color:#151515;">z0:</div>
<div class="t" style="left:772px;top:419.9px;font-size:12.5px;line-height:15.5px;color:#151515;">304.07</div>
<div class="t" style="left:839px;top:419.9px;font-size:12.5px;line-height:15.5px;color:#151515;">mm</div>
<div class="t" style="left:724px;top:449.9px;font-size:12.5px;line-height:15.5px;color:#151515;">d0:</div>
<div class="t" style="left:772px;top:449.9px;font-size:12.5px;line-height:15.5px;color:#151515;">49.39</div>
<div class="t" style="left:839px;top:449.9px;font-size:12.5px;line-height:15.5px;color:#151515;">μm</div>
<div class="t" style="left:724px;top:479.9px;font-size:12.5px;line-height:15.5px;color:#151515;">ZR:</div>
<div class="t" style="left:772px;top:479.9px;font-size:12.5px;line-height:15.5px;color:#151515;">4.81</div>
<div class="t" style="left:839px;top:479.9px;font-size:12.5px;line-height:15.5px;color:#151515;">mm</div>
<div class="t" style="left:724px;top:509.9px;font-size:12.5px;line-height:15.5px;color:#151515;">Div:</div>
<div class="t" style="left:772px;top:509.9px;font-size:12.5px;line-height:15.5px;color:#151515;">10.28</div>
<div class="t" style="left:839px;top:509.9px;font-size:12.5px;line-height:15.5px;color:#151515;">mrad</div>
<div class="a" style="left:708px;top:560px;width:220px;height:73px;border:1px solid #1e4562;box-shadow:inset 1px 1px 0 #fbfdff,1px 1px 0 #fbfdff"></div>
<div class="a" style="left:713px;top:559px;width:42px;height:3px;background:#dfe2e8"></div>
<svg class="a" style="left:718.5px;top:548px;overflow:visible" width="34" height="24"><g fill="url(#m2teal)" stroke="url(#m2teal)"><use href="#m2sym"/></g></svg>
<div class="t" style="left:730px;top:579.7px;font-size:13px;line-height:16px;color:#151515;font-weight:bold;">M2:</div>
<div class="t" style="left:773px;top:579.7px;font-size:13px;line-height:16px;color:#151515;font-weight:bold;">1.12</div>
<div class="t" style="left:729px;top:610.2px;font-size:12.5px;line-height:15.5px;color:#151515;">BPP:</div>
<div class="t" style="left:772px;top:610.2px;font-size:12.5px;line-height:15.5px;color:#151515;">0.13</div>
<div class="t" style="left:839px;top:610.2px;font-size:12.5px;line-height:15.5px;color:#151515;">mrad*mm</div>
<div class="a" style="left:974px;top:220px;width:251px;height:421px;border:1px solid #1e4562;box-shadow:inset 1px 1px 0 #fbfdff,1px 1px 0 #fbfdff"></div>
<div class="a" style="left:982px;top:219px;width:112px;height:3px;background:#dfe2e8"></div>
<svg class="a" style="left:993px;top:210px" width="18" height="20"><defs><linearGradient id="lg993210" x1="0" y1="0" x2="0" y2="1"><stop offset="0" stop-color="#5ec3ec"/><stop offset="0.55" stop-color="#2683b3"/><stop offset="1" stop-color="#1c6b95"/></linearGradient></defs><text x="0" y="18" font-family="Liberation Sans" font-weight="bold" font-size="24" fill="url(#lg993210)" transform="scale(1.05,1)">Y</text></svg>
<div class="t" style="left:1026px;top:214.2px;font-size:12.5px;line-height:15.5px;color:#2a5e87;">Parameters</div>
<div class="a" style="left:984px;top:236px;width:220px;height:147px;border:1px solid #1e4562;box-shadow:inset 1px 1px 0 #fbfdff,1px 1px 0 #fbfdff"></div>
<div class="a" style="left:992px;top:235px;width:73px;height:3px;background:#dfe2e8"></div>
<div class="t" style="left:996px;top:229.8px;font-size:12.5px;line-height:15.5px;color:#2a5e87;">Before Lens</div>
<div class="a" style="left:984px;top:394px;width:220px;height:147px;border:1px solid #1e4562;box-shadow:inset 1px 1px 0 #fbfdff,1px 1px 0 #fbfdff"></div>
<div class="a" style="left:992px;top:393px;width:64px;height:3px;background:#dfe2e8"></div>
<div class="t" style="left:995px;top:388.1px;font-size:12.5px;line-height:15.5px;color:#2a5e87;">After Lens</div>
<div class="t" style="left:1001px;top:261.7px;font-size:12.5px;line-height:15.5px;color:#151515;">z0:</div>
<div class="t" style="left:1047px;top:261.7px;font-size:12.5px;line-height:15.5px;color:#151515;">9184.85</div>
<div class="t" style="left:1116px;top:261.7px;font-size:12.5px;line-height:15.5px;color:#151515;">mm</div>
<div class="t" style="left:1001px;top:291.7px;font-size:12.5px;line-height:15.5px;color:#151515;">d0:</div>
<div class="t" style="left:1047px;top:291.7px;font-size:12.5px;line-height:15.5px;color:#151515;">2289.87</div>
<div class="t" style="left:1116px;top:291.7px;font-size:12.5px;line-height:15.5px;color:#151515;">μm</div>
<div class="t" style="left:1001px;top:321.7px;font-size:12.5px;line-height:15.5px;color:#151515;">ZR:</div>
<div class="t" style="left:1047px;top:321.7px;font-size:12.5px;line-height:15.5px;color:#151515;">10326.02</div>
<div class="t" style="left:1116px;top:321.7px;font-size:12.5px;line-height:15.5px;color:#151515;">mm</div>
<div class="t" style="left:1001px;top:351.7px;font-size:12.5px;line-height:15.5px;color:#151515;">Div:</div>
<div class="t" style="left:1047px;top:351.7px;font-size:12.5px;line-height:15.5px;color:#151515;">0.22</div>
<div class="t" style="left:1116px;top:351.7px;font-size:12.5px;line-height:15.5px;color:#151515;">mrad</div>
<div class="t" style="left:1001px;top:419.9px;font-size:12.5px;line-height:15.5px;color:#151515;">z0:</div>
<div class="t" style="left:1047px;top:419.9px;font-size:12.5px;line-height:15.5px;color:#151515;">304.31</div>
<div class="t" style="left:1116px;top:419.9px;font-size:12.5px;line-height:15.5px;color:#151515;">mm</div>
<div class="t" style="left:1001px;top:449.9px;font-size:12.5px;line-height:15.5px;color:#151515;">d0:</div>
<div class="t" style="left:1047px;top:449.9px;font-size:12.5px;line-height:15.5px;color:#151515;">50.43</div>
<div class="t" style="left:1116px;top:449.9px;font-size:12.5px;line-height:15.5px;color:#151515;">μm</div>
<div class="t" style="left:1001px;top:479.9px;font-size:12.5px;line-height:15.5px;color:#151515;">ZR:</div>
<div class="t" style="left:1047px;top:479.9px;font-size:12.5px;line-height:15.5px;color:#151515;">5.01</div>
<div class="t" style="left:1116px;top:479.9px;font-size:12.5px;line-height:15.5px;color:#151515;">mm</div>
<div class="t" style="left:1001px;top:509.9px;font-size:12.5px;line-height:15.5px;color:#151515;">Div:</div>
<div class="t" style="left:1047px;top:509.9px;font-size:12.5px;line-height:15.5px;color:#151515;">10.07</div>
<div class="t" style="left:1116px;top:509.9px;font-size:12.5px;line-height:15.5px;color:#151515;">mrad</div>
<div class="a" style="left:984px;top:560px;width:220px;height:73px;border:1px solid #1e4562;box-shadow:inset 1px 1px 0 #fbfdff,1px 1px 0 #fbfdff"></div>
<div class="a" style="left:989px;top:559px;width:42px;height:3px;background:#dfe2e8"></div>
<svg class="a" style="left:994.5px;top:548px;overflow:visible" width="34" height="24"><g fill="url(#m2teal)" stroke="url(#m2teal)"><use href="#m2sym"/></g></svg>
<div class="t" style="left:1003px;top:579.7px;font-size:13px;line-height:16px;color:#151515;font-weight:bold;">M2:</div>
<div class="t" style="left:1048px;top:579.7px;font-size:13px;line-height:16px;color:#151515;font-weight:bold;">1.12</div>
<div class="t" style="left:1002px;top:610.2px;font-size:12.5px;line-height:15.5px;color:#151515;">BPP:</div>
<div class="t" style="left:1047px;top:610.2px;font-size:12.5px;line-height:15.5px;color:#151515;">0.13</div>
<div class="t" style="left:1116px;top:610.2px;font-size:12.5px;line-height:15.5px;color:#151515;">mrad*mm</div>
<div class="a" style="left:1252px;top:220px;width:249px;height:421px;border:1px solid #1e4562;box-shadow:inset 1px 1px 0 #fbfdff,1px 1px 0 #fbfdff"></div>
<div class="a" style="left:1260px;top:219px;width:112px;height:3px;background:#dfe2e8"></div>
<svg class="a" style="left:1262px;top:210px" width="34" height="20"><defs><linearGradient id="lg1262210" x1="0" y1="0" x2="0" y2="1"><stop offset="0" stop-color="#5ec3ec"/><stop offset="0.55" stop-color="#2683b3"/><stop offset="1" stop-color="#1c6b95"/></linearGradient></defs><text x="0" y="18" font-family="Liberation Sans" font-weight="bold" font-size="24" fill="url(#lg1262210)" letter-spacing="-1.5">XY</text></svg>
<div class="t" style="left:1303px;top:214.2px;font-size:12.5px;line-height:15.5px;color:#2a5e87;">Parameters</div>
<div class="a" style="left:1263px;top:236px;width:218px;height:147px;border:1px solid #1e4562;box-shadow:inset 1px 1px 0 #fbfdff,1px 1px 0 #fbfdff"></div>
<div class="a" style="left:1271px;top:235px;width:73px;height:3px;background:#dfe2e8"></div>
<div class="t" style="left:1275px;top:229.8px;font-size:12.5px;line-height:15.5px;color:#2a5e87;">Before Lens</div>
<div class="a" style="left:1263px;top:394px;width:218px;height:147px;border:1px solid #1e4562;box-shadow:inset 1px 1px 0 #fbfdff,1px 1px 0 #fbfdff"></div>
<div class="a" style="left:1271px;top:393px;width:64px;height:3px;background:#dfe2e8"></div>
<div class="t" style="left:1274px;top:388.1px;font-size:12.5px;line-height:15.5px;color:#2a5e87;">After Lens</div>
<div class="t" style="left:1278.6px;top:262.0px;font-size:12.5px;line-height:15.5px;color:#151515;">Delta Z:</div>
<div class="t" style="left:1278.6px;top:292.0px;font-size:12.5px;line-height:15.5px;color:#151515;">Astigmatism</div>
<div class="t" style="left:1278.6px;top:420.2px;font-size:12.5px;line-height:15.5px;color:#151515;">Delta Z:</div>
<div class="t" style="left:1278.6px;top:450.2px;font-size:12.5px;line-height:15.5px;color:#151515;">Astigmatism</div>
</div></div>
<div class="a" style="left:708px;top:651px;width:13px;height:13px;border:1px solid #555a60;border-radius:2px;background:#f4f4f4"></div>
<div class="t" style="left:724px;top:651.9px;font-size:12.5px;line-height:15.5px;color:#151515;">Save Data to Acquisition File</div><svg class="a" style="left:681px;top:148px" width="685" height="42" viewBox="681 148 685 42">
<defs>
<linearGradient id="cy" x1="0" y1="0" x2="0" y2="1"><stop offset="0" stop-color="#22c6f8"/><stop offset="1" stop-color="#08a6de"/></linearGradient>
<linearGradient id="m2s" x1="0" y1="0" x2="0" y2="1"><stop offset="0" stop-color="#ffffff"/><stop offset="0.6" stop-color="#e6eaee"/><stop offset="1" stop-color="#a9b2ba"/></linearGradient>
<linearGradient id="db" x1="0" y1="0" x2="1" y2="0"><stop offset="0" stop-color="#8d8f92"/><stop offset="0.35" stop-color="#f2f2f2"/><stop offset="0.7" stop-color="#c4c6c8"/><stop offset="1" stop-color="#8a8c8f"/></linearGradient>
<linearGradient id="arr" x1="0" y1="0" x2="0" y2="1"><stop offset="0" stop-color="#5fd0f6"/><stop offset="1" stop-color="#0f8fd0"/></linearGradient>
</defs>
<!-- left arrow -->
<path d="M690 161.5V169.5L685.5 165.5Z" fill="none" stroke="#6e737a" stroke-width="1"/>
<!-- right arrow -->
<path d="M1348 161.5V169.5L1352.5 165.5Z" fill="none" stroke="#6e737a" stroke-width="1"/>
<!-- tab strip bottom line -->
<!-- Home tab -->
<path d="M699.5 185.5L735.5 149.5H808.5V185.5Z" fill="#0b568a"/>
<path d="M700 185L735.5 149.5H808" fill="none" stroke="#e9f0f5" stroke-width="1.2"/>
<!-- separators -->
<rect x="808.5" y="149" width="1.5" height="36" fill="#c9ced6"/>
<path d="M810 185V155L815 149.5H887.5V185Z" fill="#0b568a"/>
<path d="M810 155.5L815.5 149.5H887.5" fill="none" stroke="#d7dce2" stroke-width="1.2"/>
<rect x="887.5" y="149" width="1.5" height="36" fill="#c9ced6"/>
<path d="M889 185V155L894 149.5H1040V185Z" fill="#0b568a"/>
<path d="M889 155.5L894.5 149.5H1030" fill="none" stroke="#d7dce2" stroke-width="1.2"/>
<!-- M2 results active -->
<path d="M992.5 185.5L1029 149H1128.5V185.5Z" fill="url(#cy)"/>
<path d="M993 185L1029 149H1128" fill="none" stroke="#e9f6fb" stroke-width="1.2"/>
<rect x="1128.5" y="149" width="1.5" height="36" fill="#c9ced6"/>
<!-- M2 setup -->
<path d="M1130 185V155L1135 149.5H1227.5V185Z" fill="#0b568a"/>
<path d="M1130 155.5L1135.5 149.5H1227.5V185" fill="none" stroke="#d7dce2" stroke-width="1.2"/>

<!-- house icon -->
<g>
<rect x="742" y="166" width="24" height="16" fill="#efe4c4"/>
<path d="M742 166h24v16h-24z" fill="none" stroke="#d5c59c" stroke-width=".8"/>
<path d="M738 170L754 155L770 170" fill="none" stroke="#d01e2e" stroke-width="3.4" stroke-linejoin="round" stroke-linecap="round"/>
<rect x="745" y="154" width="3" height="6" fill="#d01e2e"/>
<rect x="750" y="171" width="8" height="11" fill="#a86a24"/>
<rect x="743" y="172" width="3" height="2" fill="#cfc09a"/><rect x="762" y="172" width="3" height="2" fill="#cfc09a"/>
<rect x="743" y="177" width="3" height="2" fill="#cfc09a"/><rect x="762" y="177" width="3" height="2" fill="#cfc09a"/>
</g>
<text x="774" y="171" font-family="Liberation Sans" font-size="11.5" fill="#fff">Ho...</text>
<!-- gears -->
<g>
<circle cx="832" cy="163" r="10.3" fill="#d8d8d8" stroke="#ececec" stroke-width="4.2" stroke-dasharray="5 4.3"/>
<circle cx="832" cy="163" r="8.4" fill="#e2e2e2"/>
<circle cx="832" cy="163" r="3.2" fill="#0a0a0a"/>
<circle cx="843" cy="176" r="5.3" fill="#dadada" stroke="#ececec" stroke-width="2.6" stroke-dasharray="3 2.55"/>
<circle cx="843" cy="176" r="1.8" fill="#1a1a1a"/>
</g>
<text x="853.5" y="171" font-family="Liberation Sans" font-size="11.5" fill="#fff">Set...</text>
<!-- database download -->
<g>
<rect x="897" y="162" width="29" height="6" rx="1" fill="url(#db)"/>
<rect x="897" y="169" width="29" height="6" rx="1" fill="url(#db)"/>
<rect x="897" y="176" width="29" height="6.5" rx="1" fill="url(#db)"/>
<path d="M905 150.5H918V163H924L911.5 176L899 163H905Z" fill="url(#arr)"/>
</g>
<text x="930" y="171" font-family="Liberation Sans" font-size="11.5" fill="#fff">Data Acquisition</text>
<!-- re-cover acq overflow with active tab -->
<path d="M992.5 185.5L1029 149H1128.5V185.5Z" fill="url(#cy)"/>
<path d="M993 185L1029 149H1128" fill="none" stroke="#e9f6fb" stroke-width="1.2"/>
<!-- M2 icons -->
<g transform="translate(1024.5 159.3)" fill="url(#m2silver)" stroke="url(#m2silver)"><use href="#m2sym"/></g>
<text x="1064" y="171" font-family="Liberation Sans" font-weight="bold" font-size="11" fill="#0d1a24">M2 Results</text>
<g transform="translate(1136.4 159.3)" fill="url(#m2silver)" stroke="url(#m2silver)"><use href="#m2sym"/></g>
<text x="1174" y="171" font-family="Liberation Sans" font-size="11" fill="#fff">M2 Set...</text>
</svg>

</body></html>
